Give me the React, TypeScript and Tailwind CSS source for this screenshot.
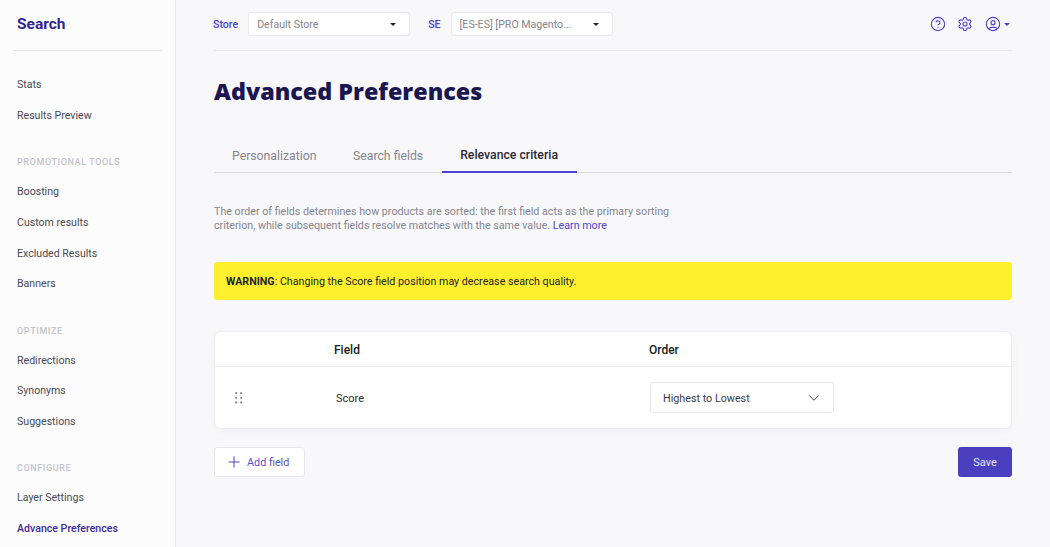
import { ChevronDown, Plus, CircleHelp, Settings, CircleUser } from "lucide-react";

function Caret() {
  return <span className="border-x-[3px] border-t-[3px] border-x-transparent border-t-[#1f1f2b] w-0 h-0" />;
}

function NavItem({ label, active = false }: { label: string; active?: boolean }) {
  return (
    <div className={`h-[30.6px] flex items-center pl-[17px] text-[10.6px] ${active ? "text-[#3b2a9c] font-medium" : "text-[#4a4a55]"}`}>
      {label}
    </div>
  );
}

function NavHeading({ label }: { label: string }) {
  return (
    <div className="pl-[17px] mt-[25.3px] mb-[8.6px] text-[9px] font-medium tracking-[0.6px] leading-[12px] text-[#c4c4ca]">{label}</div>
  );
}

function Sidebar() {
  return (
    <aside className="w-[176px] shrink-0 h-[547px] overflow-hidden bg-[#fcfcfd] border-r border-[#ececf0]">
      <div className="mx-[13px] h-[51px] border-b border-[#e8e8ec] pl-[4px] flex items-center">
        <span className="text-[15.5px] font-bold text-[#34248f] -mt-[1px]">Search</span>
      </div>
      <div className="mt-[19px]">
        <NavItem label="Stats" />
        <NavItem label="Results Preview" />
      </div>
      <NavHeading label="PROMOTIONAL TOOLS" />
      <NavItem label="Boosting" />
      <NavItem label="Custom results" />
      <NavItem label="Excluded Results" />
      <NavItem label="Banners" />
      <NavHeading label="OPTIMIZE" />
      <NavItem label="Redirections" />
      <NavItem label="Synonyms" />
      <NavItem label="Suggestions" />
      <NavHeading label="CONFIGURE" />
      <NavItem label="Layer Settings" />
      <NavItem label="Advance Preferences" active />
    </aside>
  );
}

function TopSelect({ text, width }: { text: string; width: string }) {
  return (
    <div className={`h-[24px] ${width} bg-white border border-[#e8e8ec] rounded-[3px] flex items-center justify-between pl-[8px] pr-[13px] text-[10.6px] text-[#85858e]`}>
      <span className="mt-[1px]">{text}</span>
      <Caret />
    </div>
  );
}

export default function App() {
  return (
    <div className="w-[1050px] h-[547px] overflow-hidden flex bg-[#f8f8fb] font-['Roboto',sans-serif]">
      <Sidebar />
      <main className="flex-1 pl-[38px] pr-[38px]">
        <div className="h-[51px] border-b border-[#e8e8ec] flex items-center">
          <span className="text-[10.6px] font-medium text-[#4f42d0] -ml-[1px] mr-[10px] -mt-[1px]">Store</span>
          <div className="-mt-[2px]"><TopSelect text="Default Store" width="w-[162px]" /></div>
          <span className="text-[10.6px] font-medium text-[#4f42d0] ml-[18px] mr-[10px] -mt-[1px]">SE</span>
          <div className="-mt-[2px]"><TopSelect text="[ES-ES] [PRO Magento..." width="w-[162px]" /></div>
          <div className="ml-auto mr-[2px] -mt-[2px] flex items-center text-[#4f42d0]">
            <CircleHelp size={16} strokeWidth={1.7} />
            <Settings size={16} strokeWidth={1.7} className="ml-[11.5px]" />
            <CircleUser size={16} strokeWidth={1.7} className="ml-[11.5px]" />
            <span className="ml-[3.5px] border-x-[3px] border-t-[3.5px] border-x-transparent border-t-[#4f42d0] w-0 h-0" />
          </div>
        </div>

        <h1 className="mt-[24px] text-[23.3px] leading-[32px] font-extrabold text-[#1a1650] font-['Open_Sans',sans-serif]">
          Advanced Preferences
        </h1>

        <div className="mt-[30px] h-[36px] flex border-b border-[#dcdce0] text-[12.25px]">
          <div className="px-[18px] pt-[3px] flex items-center text-[#85858e]">Personalization</div>
          <div className="px-[18.5px] pt-[3px] flex items-center text-[#85858e]">Search fields</div>
          <div className="px-[18.5px] pt-[3px] flex items-center font-medium text-[#2a2a33] border-b-2 border-[#4f42d0] h-[36px]">Relevance criteria</div>
        </div>

        <p className="mt-[32px] w-[480px] text-[10.7px] leading-[14px] text-[#85858e]">
          The order of fields determines how products are sorted: the first field acts as the primary sorting criterion, while subsequent fields resolve matches with the same value. <span className="text-[#4f42d0]">Learn more</span>
        </p>

        <div className="mt-[29px] h-[38px] bg-[#fff02e] rounded-[3px] px-[12px] pt-[2px] flex items-center text-[10.7px] text-[#25252c]">
          <span><b className="font-bold">WARNING</b>: Changing the Score field position may decrease search quality.</span>
        </div>

        <div className="mt-[31px] bg-white rounded-[7px] border border-[#eeeef1] shadow-[0_2px_8px_rgba(30,30,60,0.04)]">
          <div className="h-[35px] pt-[1px] border-b border-[#eeeef1] flex items-center text-[12px] font-medium text-[#1c1c22]">
            <span className="ml-[119px] w-[315px]">Field</span>
            <span>Order</span>
          </div>
          <div className="h-[61px] flex items-center text-[11px] text-[#2a2a33]">
            <svg width="8" height="12" viewBox="0 0 8 12" className="ml-[20px] text-[#85858e]" fill="currentColor">
              <circle cx="1.2" cy="1.2" r="1.1" /><circle cx="6.2" cy="1.2" r="1.1" />
              <circle cx="1.2" cy="5.8" r="1.1" /><circle cx="6.2" cy="5.8" r="1.1" />
              <circle cx="1.2" cy="10.4" r="1.1" /><circle cx="6.2" cy="10.4" r="1.1" />
            </svg>
            <span className="ml-[93px] w-[314px] mt-[4px]">Score</span>
            <div className="h-[31px] w-[184px] border border-[#e8e8ec] rounded-[3px] flex items-center justify-between pl-[12px] pr-[10px] text-[10.75px] text-[#3a3a44]">
              <span className="mt-[3px]">Highest to Lowest</span>
              <ChevronDown size={18} strokeWidth={1.3} />
            </div>
          </div>
        </div>

        <div className="mt-[18px] flex justify-between">
          <button className="h-[30px] w-[91px] bg-white border border-[#e8e8ec] rounded-[3px] flex items-center pl-[10px] gap-[4px] text-[10.8px] text-[#5b50c4]">
            <Plus size={18} strokeWidth={1.3} className="text-[#4f42b8]" />
            <span className="mt-[2px]">Add field</span>
          </button>
          <button className="h-[30px] w-[54px] pt-[2px] bg-[#4a3fbf] rounded-[3px] text-[11px] text-[#e6e4f7]">Save</button>
        </div>
      </main>
    </div>
  );
}
